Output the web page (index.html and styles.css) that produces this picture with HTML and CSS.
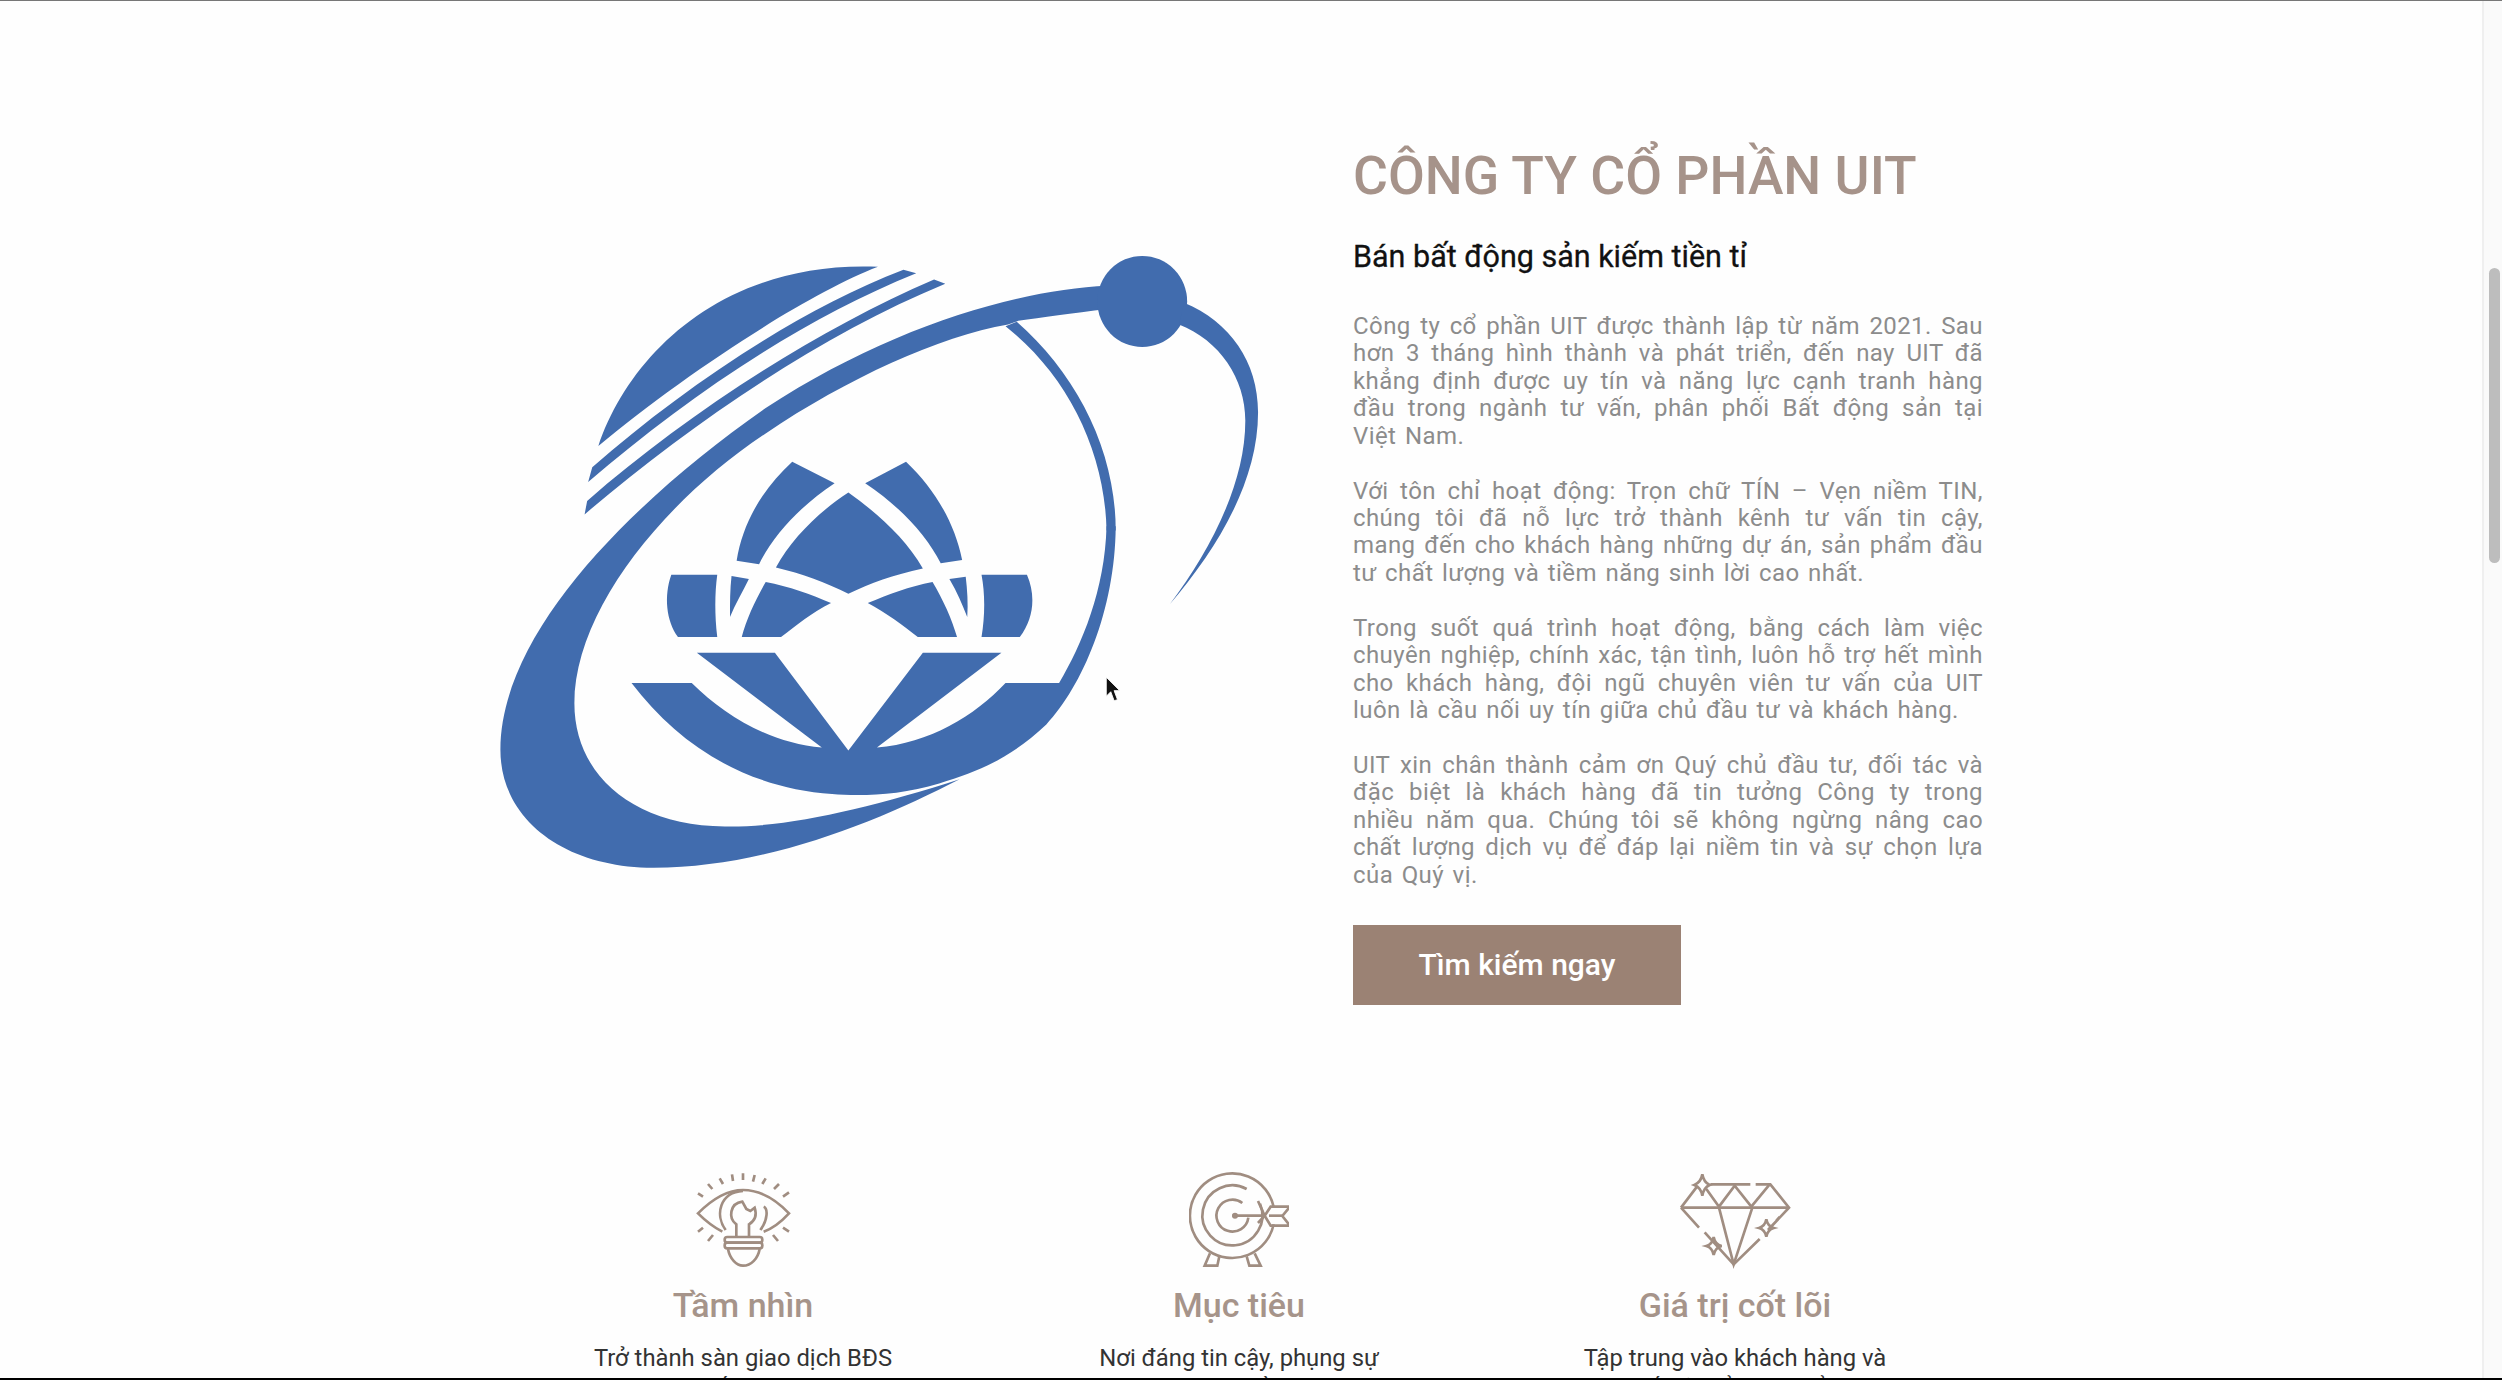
FILE: index.html
```html
<!DOCTYPE html>
<html lang="vi">
<head>
  <meta charset="UTF-8">
  <meta name="viewport" content="width=device-width, initial-scale=1.0">
  <title>Công ty cổ phần UIT</title>
  <link rel="stylesheet" href="styles.css">
</head>
<body>
  <div class="window">
    <main class="page">
      <section class="hero">
        <div class="hero-logo">
          <svg class="logo" viewBox="0 0 1568 1565" preserveAspectRatio="none" fill="#416cae">
            <path d="M232 510C290 300 470 70 780 85C640 150 400 340 232 510Z"/>
            <path d="M212 595L220 560C400 370 620 190 830 92L855 100C620 215 400 400 212 595Z"/>
            <path d="M205 672L210 640C400 440 650 240 890 115L912 125C660 250 400 470 205 672Z"/>
            <path d="M1230 130C1050 140 800 230 560 420C300 640 40 950 40 1230C40 1400 170 1510 340 1510C560 1510 780 1400 940 1300C760 1370 600 1415 480 1412C300 1410 185 1290 185 1120C185 900 360 640 560 480C720 350 900 250 1035 222L1055 213C1100 205 1160 195 1230 185Z"/>
            <path d="M1030 226L1052 215C1170 340 1246 520 1246 710L1228 710C1225 520 1150 340 1030 226Z"/>
            <path d="M297 1072L415 1072C480 1150 570 1215 670 1225L425 1000L578 1000L722 1232L868 1000L1022 1000L778 1225C880 1215 970 1150 1030 1072L1135 1072C1180 980 1225 850 1228 700L1246 700C1245 900 1180 1080 1110 1170C1040 1250 980 1280 900 1310C820 1340 740 1340 690 1335C520 1320 390 1220 297 1072Z"/>
            <ellipse cx="1298" cy="167" rx="88" ry="108"/>
            <path d="M1380 170C1470 215 1525 310 1525 430C1525 600 1440 760 1352 885C1430 760 1500 600 1500 450C1500 350 1450 260 1370 222Z"/>
            <path d="M722 620C780 670 835 730 868 800C810 815 765 835 722 860C680 835 630 812 580 798C610 730 665 665 722 620Z"/>
            <path d="M612 547L695 598C630 650 575 720 547 790L503 782C515 690 555 610 612 547Z"/>
            <path d="M835 547L755 598C820 650 875 720 903 788L945 780C930 690 890 610 835 547Z"/>
            <path d="M375 815L465 815C460 860 460 910 465 963L388 963C365 925 360 865 375 815Z"/>
            <path d="M983 815L1072 815C1090 865 1085 920 1058 963L983 963C990 910 990 860 983 815Z"/>
            <path d="M493 818L527 825C515 855 500 885 490 915C490 880 490 850 493 818Z"/>
            <path d="M920 825L952 820C955 850 957 885 955 915C945 885 935 855 920 825Z"/>
            <path d="M560 832C605 842 650 862 688 882C650 905 620 935 590 963L513 963C522 920 540 875 560 832Z"/>
            <path d="M887 832C842 842 800 862 760 882C795 905 830 935 858 963L935 963C925 920 908 875 887 832Z"/>
          </svg>
        </div>
        <div class="hero-text">
          <h1>CÔNG TY CỔ PHẦN UIT</h1>
          <h2>Bán bất động sản kiếm tiền tỉ</h2>
          <p>Công ty cổ phần UIT được thành lập từ năm 2021. Sau hơn 3 tháng hình thành và phát triển, đến nay UIT đã khẳng định được uy tín và năng lực cạnh tranh hàng đầu trong ngành tư vấn, phân phối Bất động sản tại Việt Nam.</p>
          <p>Với tôn chỉ hoạt động: Trọn chữ TÍN – Vẹn niềm TIN, chúng tôi đã nỗ lực trở thành kênh tư vấn tin cậy, mang&nbsp;đến cho khách hàng những dự án, sản phẩm đầu tư chất lượng và tiềm năng sinh lời cao nhất.</p>
          <p>Trong suốt quá trình hoạt động, bằng cách làm việc chuyên nghiệp, chính xác, tận tình, luôn hỗ trợ hết mình cho khách hàng, đội ngũ chuyên viên tư vấn của UIT luôn là cầu nối uy tín giữa chủ đầu tư và khách hàng.</p>
          <p>UIT xin chân thành cảm ơn Quý chủ đầu tư, đối tác và đặc biệt là khách hàng đã tin tưởng Công ty trong nhiều năm qua. Chúng tôi sẽ không ngừng nâng cao chất lượng dịch vụ để đáp lại niềm tin và sự chọn lựa của Quý vị.</p>
          <a class="btn" href="#">Tìm kiếm ngay</a>
        </div>
      </section>

      <section class="features">
        <div class="feature">
          <svg class="feature-icon" viewBox="400 55 300 300">
            <path d="M415 125L430 135M445 97L458 112M480 80L490 97M517 68L520 88M550 65L550 85M585 70L580 90M618 80L608 97M658 97L643 112M688 122L670 135M415 240L430 228M445 268L460 250M688 240L670 228M655 268L640 250"/>
            <path d="M488 240C460 225 435 205 415 185C460 140 505 115 550 115C600 115 645 140 688 185C665 210 640 230 612 240"/>
            <path d="M498 235C465 190 480 122 550 118M602 235C625 205 625 170 612 165"/>
            <path d="M530 255L530 218C505 200 510 155 548 150L560 172L572 178L585 168C592 190 585 208 568 218L568 255"/>
            <rect x="495" y="256" width="113" height="17" rx="8"/>
            <rect x="495" y="273" width="113" height="17" rx="8"/>
            <path d="M505 292C510 320 530 342 550 342C575 342 595 320 600 292"/>
          </svg>
          <h3>Tầm nhìn</h3>
          <p>Trở thành sàn giao dịch BĐS lớn nhất Việt Nam</p>
        </div>
        <div class="feature">
          <svg class="feature-icon" viewBox="385 55 300 300">
            <path d="M639 166A127 127 0 1 0 639 218"/>
            <path d="M558 112A90 90 0 1 0 598 156"/>
            <path d="M545 154A48 48 0 1 0 563 198"/>
            <path d="M515 192L612 192"/>
            <path d="M592 148L612 192L592 214"/>
            <path d="M612 192L630 165L688 165L665 193L688 222L630 222Z"/>
            <path d="M625 192L665 192"/>
            <path d="M448 305L432 342L470 342L476 314M558 314L566 342L600 342L582 305"/>
            <circle class="solid" cx="523" cy="192" r="9"/>
          </svg>
          <h3>Mục tiêu</h3>
          <p>Nơi đáng tin cậy, phụng sự mọi nhà đầu tư</p>
        </div>
        <div class="feature">
          <svg class="feature-icon diamond" viewBox="355 55 345 300">
            <path d="M452 98L572 98M588 98L632 98L688 168L625 235M660 196L650 207M364 168L412 105M364 168L418 228M435 242L522 338L600 262"/>
            <path d="M364 168L688 168"/>
            <path d="M440 112L478 165L525 102L575 165L630 98"/>
            <path d="M478 168L522 338L578 168"/>
            <path d="M428 68Q432 92 450 100Q432 108 428 132Q424 108 404 100Q424 92 428 68Z"/>
            <path d="M462 256Q466 278 486 283Q466 288 462 310Q458 288 440 283Q458 278 462 256Z"/>
            <path d="M620 203Q624 224 642 229Q624 234 620 255Q616 234 598 229Q616 224 620 203Z"/>
          </svg>
          <h3>Giá trị cốt lõi</h3>
          <p>Tập trung vào khách hàng và cốt lõi để phát triển</p>
        </div>
      </section>

      <svg class="cursor" viewBox="0 0 14 24">
        <path d="M1 1L1 18L5 14L8 22L11 21L8 13L13 13Z" fill="#111" stroke="#fff" stroke-width="0.8"/>
      </svg>
    </main>
    <aside class="scrollbar">
      <div class="scrollbar-thumb"></div>
    </aside>
  </div>
</body>
</html>
```

FILE: styles.css
```css
* {
  box-sizing: border-box;
}
html, body {
  height: 100%;
}
body {
  margin: 0;
  overflow: hidden;
  font-family: Roboto, "Noto Sans", sans-serif;
  background-color: #000;
  padding-bottom: 2px;
}
.window {
  display: flex;
  height: 100%;
  background-color: #fefefe;
  border-top: 1px solid #777;
}
.page {
  position: relative;
  flex: 1;
  overflow: hidden;
}
.scrollbar {
  width: 20px;
  padding: 267px 2px 0 5px;
  background-color: #fafafa;
  border-left: 2px solid #efefef;
}
.scrollbar-thumb {
  height: 295px;
  background-color: #bdbdbd;
  border-radius: 7px;
}

.hero {
  display: flex;
  padding-top: 140px;
}
.hero-logo {
  width: 1353px;
  margin-top: -11px;
  padding: 101px 0 0 480px;
  flex: none;
}
.logo {
  display: block;
  width: 800px;
  height: 660px;
}
.hero-text {
  width: 630px;
  flex: none;
}
.hero-text h1 {
  margin: 0;
  font-size: 53.5px;
  line-height: 70px;
  font-weight: 500;
  color: #a6938a;
}
.hero-text h2 {
  margin: 26px 0 36px;
  font-size: 30.5px;
  line-height: 40px;
  font-weight: 400;
  color: #111;
  -webkit-text-stroke: 0.3px #111;
}
.hero-text p {
  margin: 0 0 27.6px;
  font-size: 24px;
  line-height: 27.4px;
  letter-spacing: 0.42px;
  word-spacing: 2.2px;
  color: #8c8c8c;
  text-align: justify;
}
.btn {
  display: block;
  width: 328px;
  height: 80px;
  margin-top: 36px;
  font-size: 30px;
  font-weight: 500;
  line-height: 80px;
  text-align: center;
  text-decoration: none;
  color: #fff;
  background-color: #9b8274;
}

.features {
  display: grid;
  grid-template-columns: repeat(3, 496px);
  padding: 165px 0 0 495px;
}
.feature {
  text-align: center;
}
.feature-icon {
  display: block;
  width: 100px;
  height: 100px;
  margin: 0 auto;
  fill: none;
  stroke: #a08d81;
  stroke-width: 8;
}
.feature-icon.diamond {
  width: 115px;
}
.feature-icon .solid {
  fill: #a08d81;
  stroke: none;
}
.feature h3 {
  margin: 15px 0 18px;
  font-size: 34px;
  line-height: 40px;
  font-weight: 500;
  color: #a6948a;
}
.feature p {
  width: 310px;
  margin: 0 auto;
  font-size: 23.8px;
  line-height: 30px;
  color: #333;
}

.cursor {
  position: absolute;
  left: 1105px;
  top: 675px;
  width: 16px;
  height: 27px;
}
```
